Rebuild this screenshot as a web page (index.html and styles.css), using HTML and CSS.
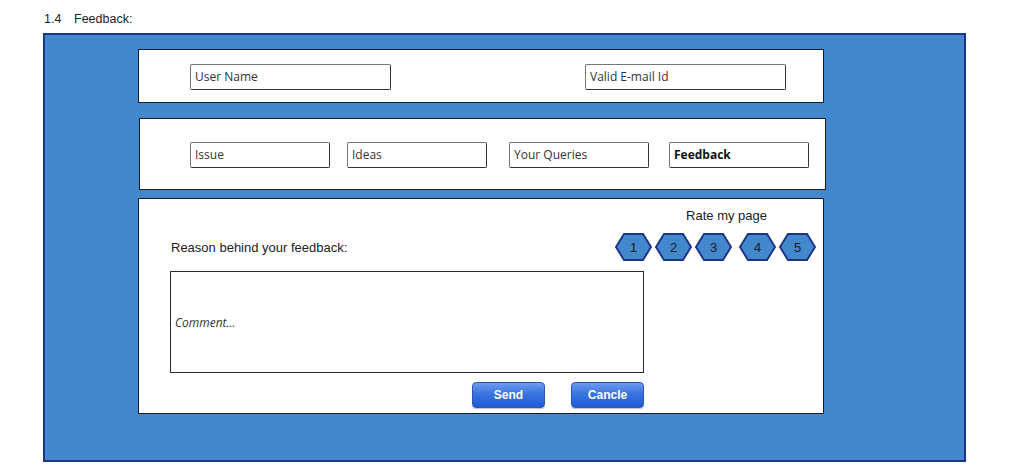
FILE: index.html
```html
<!DOCTYPE html>
<html>
<head>
<meta charset="utf-8">
<link rel="stylesheet" href="styles.css">
</head>
<body>
<div class="title"><span class="num">1.4</span><span>Feedback:</span></div>
<div class="stage">
  <div class="panel p1">
    <div class="field f-wide">User Name</div>
    <div class="field f-wide">Valid E-mail Id</div>
  </div>
  <div class="panel p2">
    <div class="field f-tab">Issue</div>
    <div class="field f-tab t2">Ideas</div>
    <div class="field f-tab t3">Your Queries</div>
    <div class="field f-tab t4 active">Feedback</div>
  </div>
  <div class="panel p3">
    <div class="rate-title">Rate my page</div>
    <div class="row">
      <span class="reason">Reason behind your feedback:</span>
      <div class="hexes">
        <svg class="hex" width="37" height="28" viewBox="0 0 37 28"><polygon points="1,14 9,1 28,1 36,14 28,27 9,27"/><text x="18.5" y="19">1</text></svg>
        <svg class="hex" width="37" height="28" viewBox="0 0 37 28"><polygon points="1,14 9,1 28,1 36,14 28,27 9,27"/><text x="18.5" y="19">2</text></svg>
        <svg class="hex" width="37" height="28" viewBox="0 0 37 28"><polygon points="1,14 9,1 28,1 36,14 28,27 9,27"/><text x="18.5" y="19">3</text></svg>
        <svg class="hex hex-sep" width="37" height="28" viewBox="0 0 37 28"><polygon points="1,14 9,1 28,1 36,14 28,27 9,27"/><text x="18.5" y="19">4</text></svg>
        <svg class="hex" width="37" height="28" viewBox="0 0 37 28"><polygon points="1,14 9,1 28,1 36,14 28,27 9,27"/><text x="18.5" y="19">5</text></svg>
      </div>
    </div>
    <div class="comment">Comment...</div>
    <div class="actions">
      <button class="btn">Send</button>
      <button class="btn">Cancle</button>
    </div>
  </div>
</div>
</body>
</html>
```
FILE: styles.css
```css
html, body {
  margin: 0;
  padding: 0;
  background: #ffffff;
}
body {
  font-family: "Liberation Sans", Arial, sans-serif;
  font-size: 12px;
  color: #222;
}
.title {
  padding: 12px 0 0 44px;
  height: 14px;
  line-height: 14px;
  font-size: 12.5px;
  margin-bottom: 7px;
  color: #222;
}
.title .num {
  display: inline-block;
  width: 30px;
}
.stage {
  margin-left: 43px;
  width: 923px;
  height: 429px;
  border: 2px solid #1f3586;
  background: #4388cc;
  padding-top: 14px;
  padding-left: 93px;
  box-sizing: border-box;
  display: flex;
  flex-direction: column;
  align-items: flex-start;
}
.panel {
  background: #fff;
  border: 1px solid #1a1a1a;
  box-sizing: border-box;
}
.p1 {
  width: 686px;
  height: 54px;
  display: flex;
  justify-content: space-between;
  align-items: flex-start;
  padding: 14px 37px 0 51px;
}
.p2 {
  margin-top: 15px;
  margin-left: 1px;
  width: 687px;
  height: 72px;
  display: flex;
  align-items: flex-start;
  padding: 23px 16px 0 50px;
}
.p3 {
  margin-top: 8px;
  width: 686px;
  height: 216px;
  padding: 10px 6px 0 31px;
  display: flex;
  flex-direction: column;
}
.field {
  height: 26px;
  box-sizing: border-box;
  border: 1px solid #333;
  border-top-color: #777;
  border-left-color: #777;
  border-radius: 2px;
  font-family: "Open Sans", "DejaVu Sans", sans-serif;
  font-size: 12px;
  line-height: 23px;
  color: #333;
  padding-left: 4px;
  white-space: nowrap;
}
.f-wide {
  width: 201px;
}
.f-tab {
  width: 140px;
}
.t2 {
  margin-left: 17px;
}
.t3 {
  margin-left: 22px;
}
.t4 {
  margin-left: 20px;
}
.field.active {
  font-weight: bold;
  color: #111;
}
.rate-title {
  align-self: flex-end;
  margin-right: 50px;
  height: 14px;
  line-height: 14px;
  font-size: 13px;
  color: #222;
}
.row {
  margin-top: 10px;
  height: 28px;
  display: flex;
  justify-content: space-between;
  align-items: center;
}
.reason {
  margin-left: 1px;
  color: #222;
  font-size: 13px;
}
.hexes {
  display: flex;
  gap: 3px;
  margin-right: 1px;
}
.hex polygon {
  fill: #4388cc;
  stroke: #1f3586;
  stroke-width: 2;
  stroke-linejoin: miter;
}
.hex text {
  font-family: "Liberation Sans", Arial, sans-serif;
  font-size: 13px;
  fill: #1a1a1a;
  text-anchor: middle;
}
.hex-sep {
  margin-left: 4px;
}
.comment {
  margin-top: 10px;
  width: 474px;
  height: 102px;
  box-sizing: border-box;
  border: 1px solid #2a2a2a;
  font-family: "Open Sans", "DejaVu Sans", sans-serif;
  font-size: 12px;
  font-style: italic;
  color: #333;
  padding-left: 4px;
  display: flex;
  align-items: center;
}
.actions {
  margin-top: 9px;
  width: 474px;
  display: flex;
  justify-content: flex-end;
  gap: 26px;
}
.btn {
  width: 73px;
  height: 26px;
  border: 1px solid #2b56b4;
  border-radius: 4px;
  background: linear-gradient(to bottom, #6d9ced 0%, #3a74e0 45%, #1f5bd6 100%);
  color: #fff;
  font-family: "Liberation Sans", Arial, sans-serif;
  font-weight: bold;
  font-size: 12px;
  padding: 0;
  box-shadow: 0 1px 1px rgba(0,0,0,0.25);
}
```
